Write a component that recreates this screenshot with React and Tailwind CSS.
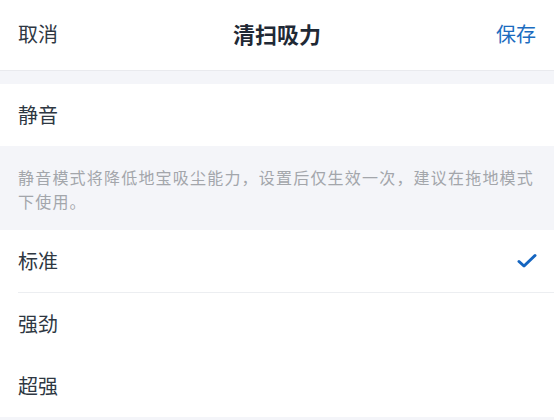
export default function App() {
  const font = { fontFamily: '"Noto Sans CJK SC", "Noto Sans", sans-serif' };
  return (
    <div className="w-[554px] h-[420px] overflow-hidden bg-[#f4f5f9]" style={font}>
      <div className="h-[67px] bg-white flex items-center justify-between px-[18px] pb-[3px] border-b border-[#e9eaee] box-content">
        <span className="text-[20px] text-[#2e3742]">取消</span>
        <span className="text-[22px] font-bold text-[#1f2935]">清扫吸力</span>
        <span className="text-[20px] text-[#1c6cbf]">保存</span>
      </div>
      <div className="h-[13px]" />
      <div className="h-[62px] bg-white flex items-center px-[18px]">
        <span className="text-[20px] text-[#2e3742]">静音</span>
      </div>
      <div className="h-[84px] pt-[19px] pl-[18px] pr-[18px] text-[16px] leading-[24px] tracking-[1.2px] text-[#a3a6ab]">
        静音模式将降低地宝吸尘能力，设置后仅生效一次，建议在拖地模式下使用。
      </div>
      <div className="bg-white">
        <div className="h-[62px] flex items-center justify-between px-[18px]">
          <span className="text-[20px] text-[#2e3742]">标准</span>
          <svg width="20" height="16" viewBox="0 0 20 16" className="mr-[-1px]">
            <path d="M2 8.5 L7 13 L18 2.5" fill="none" stroke="#1565c0" strokeWidth="3" strokeLinecap="round" strokeLinejoin="round" />
          </svg>
        </div>
        <div className="ml-[18px] h-px bg-[#eceef1]" />
        <div className="h-[62px] flex items-center px-[18px]">
          <span className="text-[20px] text-[#2e3742]">强劲</span>
        </div>
        <div className="h-[62px] flex items-center px-[18px]">
          <span className="text-[20px] text-[#2e3742]">超强</span>
        </div>
      </div>
    </div>
  );
}
